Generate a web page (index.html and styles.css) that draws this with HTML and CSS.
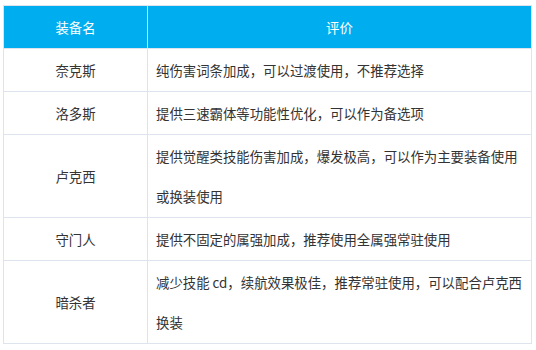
FILE: index.html
```html
<!DOCTYPE html>
<html lang="zh">
<head>
<meta charset="utf-8">
<title>装备评价</title>
<link rel="stylesheet" href="styles.css">
</head>
<body>
<table class="gear-table">
  <thead>
    <tr>
      <th class="col-name">装备名</th>
      <th class="col-eval">评价</th>
    </tr>
  </thead>
  <tbody>
    <tr>
      <td class="name">奈克斯</td>
      <td class="eval">纯伤害词条加成，可以过渡使用，不推荐选择</td>
    </tr>
    <tr>
      <td class="name">洛多斯</td>
      <td class="eval">提供三速霸体等功能性优化，可以作为备选项</td>
    </tr>
    <tr>
      <td class="name">卢克西</td>
      <td class="eval">提供觉醒类技能伤害加成，爆发极高，可以作为主要装备使用或换装使用</td>
    </tr>
    <tr>
      <td class="name">守门人</td>
      <td class="eval">提供不固定的属强加成，推荐使用全属强常驻使用</td>
    </tr>
    <tr>
      <td class="name">暗杀者</td>
      <td class="eval">减少技能 cd，续航效果极佳，推荐常驻使用，可以配合卢克西换装</td>
    </tr>
  </tbody>
</table>
</body>
</html>
```

FILE: styles.css
```css
html, body {
  margin: 0;
  padding: 0;
  background: #ffffff;
}

body {
  padding: 5px 0 0 3px;
  font-family: "Noto Sans CJK SC", "Noto Sans", sans-serif;
  font-size: 13.4px;
  color: #333333;
}

.gear-table {
  border-collapse: collapse;
  width: 529px;
  table-layout: fixed;
}

.gear-table th,
.gear-table td {
  border: 1px solid #dde4ee;
  line-height: 40px;
  padding: 1px 8px;
  font-weight: normal;
}

.gear-table th {
  background: #00aeef;
  color: #ffffff;
  text-align: center;
  padding: 0 8px;
  height: 42px;
  line-height: 42px;
}

.col-name {
  width: 127px;
}

.name {
  text-align: center;
}

.eval {
  text-align: left;
}
```
